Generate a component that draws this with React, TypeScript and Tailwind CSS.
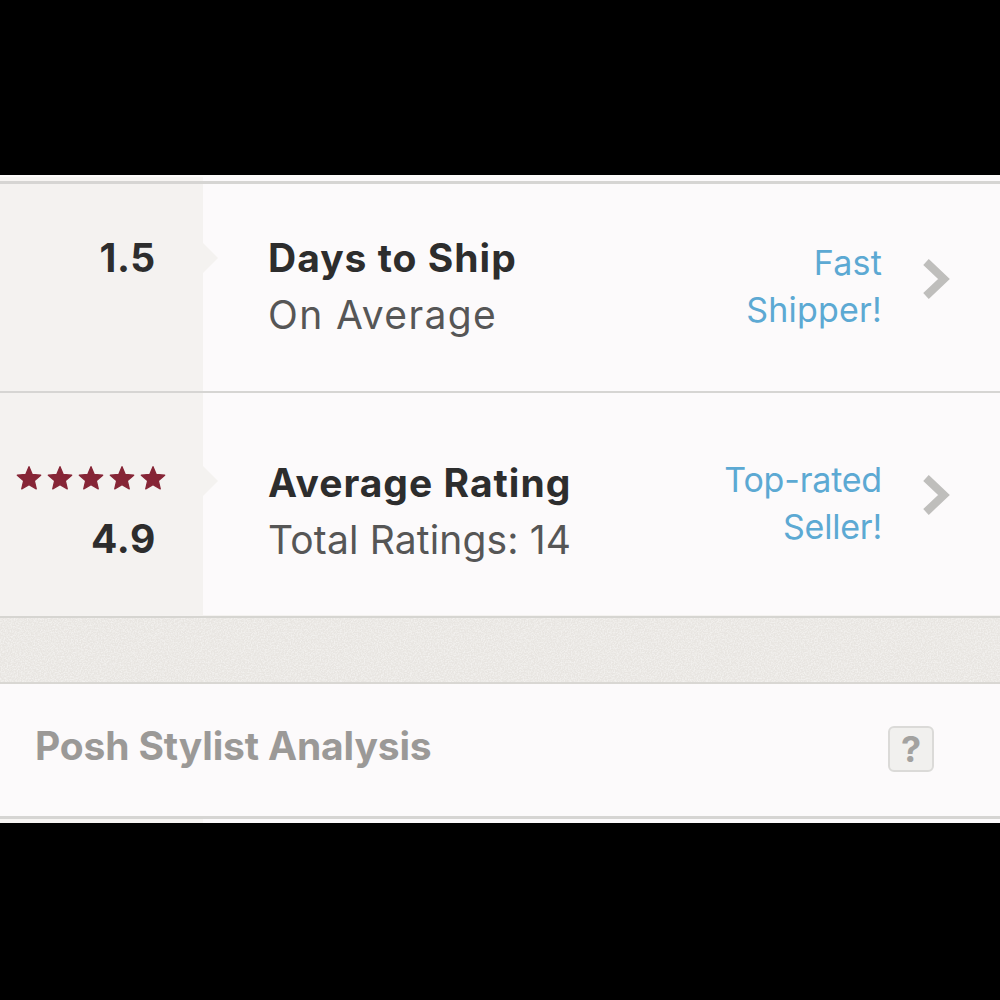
const SANS = 'font-["Inter","Noto_Sans",sans-serif]'

function Star() {
  return (
    <svg width="26" height="26" viewBox="0 0 24 24" className="shrink-0">
      <path d="M12 1.5l3 7.2 7.8.7-5.9 5.1 1.8 7.6L12 18.1l-6.7 4 1.8-7.6L1.2 9.4 9 8.7z" fill="#862536" stroke="#862536" strokeWidth="1.2" strokeLinejoin="round" />
    </svg>
  )
}

function Chevron() {
  return (
    <svg width="30" height="44" viewBox="0 0 30 44" className="shrink-0">
      <path d="M4 5l18 17L4 39" fill="none" stroke="#bfbebc" strokeWidth="8" />
    </svg>
  )
}

function Notch() {
  return (
    <div className="absolute left-[203px] top-0 w-0 h-0 border-y-[15px] border-y-transparent border-l-[15px] border-l-[#f4f2f0]" />
  )
}

function Strip({ height }: { height: string }) {
  return (
    <div className={`flex ${height} bg-[#fcfafb]`}>
      <div className="w-[203px] bg-[#f7f5f3]" />
    </div>
  )
}

function StatRow(props: {
  height: string
  left: React.ReactNode
  title: string
  titleClass: string
  sub: string
  subClass: string
  note: string[]
  noteClass: string
  notchTop: string
  textPad: string
  notePad: string
  chevPad: string
}) {
  return (
    <div className={`flex ${props.height} bg-[#fcfafb]`}>
      <div className="relative w-[203px] shrink-0 bg-[#f4f2f0]">
        {props.left}
        <div className={`absolute left-0 ${props.notchTop}`}>
          <Notch />
        </div>
      </div>
      <div className={`flex-1 pl-[65px] ${props.textPad}`}>
        <div className={`text-[39px] leading-[57px] font-bold text-[#2d2d2d] ${props.titleClass}`}>{props.title}</div>
        <div className={`text-[39px] leading-[57px] text-[#565656] ${props.subClass}`}>{props.sub}</div>
      </div>
      <div className={`flex items-start gap-[40px] pr-[48px] ${props.notePad}`}>
        <div className={`text-right text-[34px] leading-[47px] text-[#5ca9d3] ${props.noteClass}`}>
          {props.note.map(n => <div key={n}>{n}</div>)}
        </div>
        <div className={props.chevPad}>
          <Chevron />
        </div>
      </div>
    </div>
  )
}

export default function App() {
  return (
    <div className={`w-[1000px] h-[1000px] bg-black overflow-hidden ${SANS}`}>
      <div className="h-[175px]" />
      <div className="h-[2px] bg-[#fdfcfb]" />
      <Strip height="h-[4px]" />
      <div className="h-[3px] bg-[#d6d5d3]" />

      <StatRow
        height="h-[207px]"
        notchTop="top-[59px]"
        textPad="pt-[45px]"
        notePad="pt-[55px]"
        chevPad="pt-[18px]"
        left={<div className="pt-[45px] pr-[47px] text-right text-[39px] leading-[57px] font-bold tracking-[0.7px] text-[#2d2d2d]">1.5</div>}
        title="Days to Ship"
        titleClass="tracking-[1px]"
        sub="On Average"
        subClass="tracking-[1.4px]"
        note={['Fast', 'Shipper!']}
        noteClass="tracking-[0.2px]"
      />
      <div className="h-[2px] bg-[#d6d5d3]" />
      <StatRow
        height="h-[222px]"
        notchTop="top-[73px]"
        textPad="pt-[61px]"
        notePad="pt-[63px]"
        chevPad="pt-[17px]"
        left={
          <div className="pt-[72px] pr-[47px]">
            <div className="flex justify-end gap-[5px] -mr-[10px]">
              <Star /><Star /><Star /><Star /><Star />
            </div>
            <div className="mt-[19px] text-right text-[39px] leading-[57px] font-bold tracking-[0.7px] text-[#2d2d2d]">4.9</div>
          </div>
        }
        title="Average Rating"
        titleClass="tracking-[1px]"
        sub="Total Ratings: 14"
        subClass="tracking-[0.15px]"
        note={['Top-rated', 'Seller!']}
        noteClass="tracking-[-0.2px]"
      />
      <div className="h-[1px] bg-[#f4f2f0]" />
      <div className="h-[2px] bg-[#d6d5d1]" />
      {/* paper grain band */}
      <svg className="block w-full h-[64px]">
        <filter id="grain">
          <feTurbulence type="fractalNoise" baseFrequency="0.7" numOctaves="2" />
          <feColorMatrix values="0 0 0 0 1  0 0 0 0 1  0 0 0 0 1  2.5 0 0 0 -0.9" />
        </filter>
        <rect width="100%" height="100%" fill="#e8e5e1" />
        <rect width="100%" height="100%" filter="url(#grain)" opacity="0.45" />
      </svg>
      <div className="h-[2px] bg-[#d9d7d3]" />

      <div className="flex h-[132px] items-center justify-between pl-[35px] pr-[66px] bg-[#fcfafb]">
        <div className="text-[39px] font-bold tracking-[-0.15px] text-[#9b9997] -mt-[8px]">Posh Stylist Analysis</div>
        <div className="-mt-[2px] flex h-[46px] w-[46px] items-center justify-center rounded-[6px] border-2 border-[#dbdad8] bg-[#f1f0ee] text-[36px] font-bold text-[#a3a2a0]">
          ?
        </div>
      </div>
      <div className="h-[3px] bg-[#d6d5d3]" />
      <Strip height="h-[4px]" />
    </div>
  )
}
